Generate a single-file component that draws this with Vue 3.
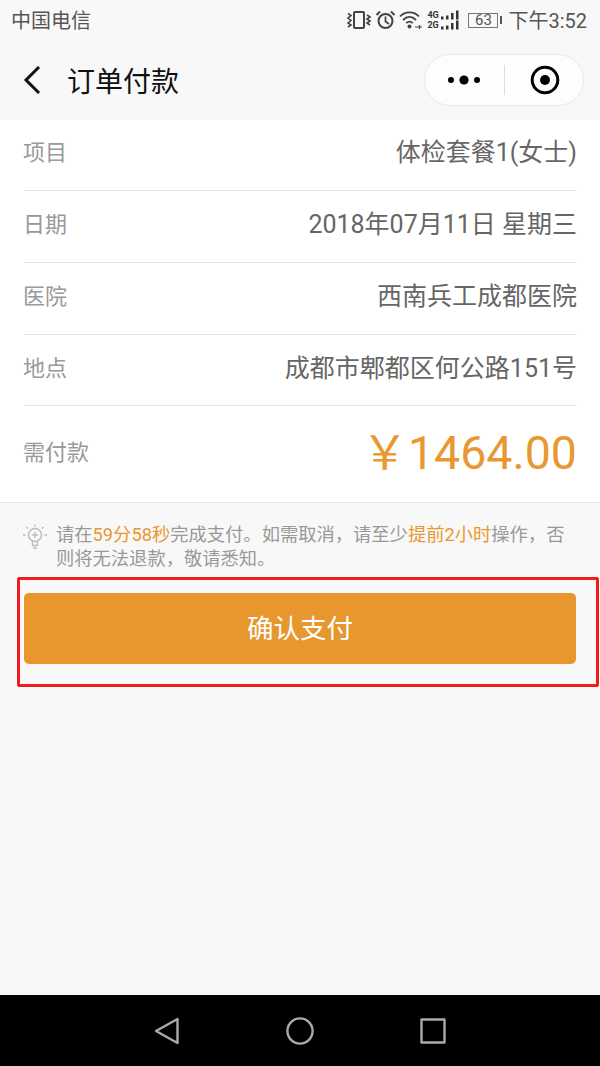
<script setup>
const rows = [
  { label: '项目', value: '体检套餐1(女士)' },
  { label: '日期', value: '2018年07月11日 星期三' },
  { label: '医院', value: '西南兵工成都医院' },
  { label: '地点', value: '成都市郫都区何公路151号' }
]
</script>

<template>
  <div class="page">
    <div class="status">
      <span class="carrier">中国电信</span>
      <div class="status-right">
        <!-- vibrate -->
        <svg class="ic" width="26" height="20" viewBox="0 0 26 20" fill="none" stroke="#444">
          <rect x="8" y="2" width="10" height="16" rx="1" stroke-width="2" />
          <path d="M2 3.5 L5 5.5 L2 8 L5 10.5 L2 13 L5 15 L2 17" stroke-width="1.6" />
          <path d="M21 5 L24 7 L21 9 L24 11 L21 13 L24 15" stroke-width="1.6" />
        </svg>
        <!-- alarm -->
        <svg class="ic" width="21" height="20" viewBox="0 0 21 20" fill="none" stroke="#444" stroke-width="2">
          <circle cx="10.5" cy="11" r="7" />
          <path d="M10.5 6.5 V11.5 L14 14" stroke-width="1.8" />
          <path d="M1.5 5 L5 1.5 M19.5 5 L16 1.5" />
        </svg>
        <!-- wifi -->
        <svg class="ic" width="24" height="20" viewBox="0 0 24 20" fill="none" stroke="#444" stroke-width="1.8">
          <path d="M1 6.5 C6 1 15 1 20 6.5" />
          <path d="M4 10 C8 6 13 6 17 10" />
          <path d="M7.2 13.2 C9.5 11 11.5 11 13.8 13.2" />
          <circle cx="10.5" cy="16.5" r="2" fill="#444" stroke="none" />
          <path d="M16 17 H23 M20.5 15 V19" stroke-width="1.2" />
        </svg>
        <!-- signal -->
        <div class="signal">
          <div class="sig-row">
            <span class="net">4G</span>
            <svg width="20" height="10" viewBox="0 0 20 10" fill="#333">
              <rect x="1" y="6.5" width="2.5" height="3" /><rect x="6" y="5.5" width="2.5" height="4" /><rect x="11" y="3" width="2.5" height="6.5" /><rect x="16" y="0.5" width="2.5" height="9" />
            </svg>
          </div>
          <div class="sig-row">
            <span class="net">2G</span>
            <svg width="20" height="10" viewBox="0 0 20 10" fill="#333">
              <rect x="1" y="6.5" width="2.5" height="3" /><rect x="6" y="5.5" width="2.5" height="4" /><rect x="11" y="3" width="2.5" height="6.5" /><rect x="16" y="0.5" width="2.5" height="9" />
            </svg>
          </div>
        </div>
        <div class="battery"><span class="batt-box">63</span><i class="batt-tip"></i></div>
        <span class="time">下午3:52</span>
      </div>
    </div>

    <div class="nav">
      <svg class="back" width="20" height="30" viewBox="0 0 20 30" fill="none" stroke="#111" stroke-width="3">
        <path d="M17 2 L4 15 L17 28" />
      </svg>
      <span class="title">订单付款</span>
      <div class="capsule">
        <div class="cap-part">
          <svg width="34" height="12" viewBox="0 0 34 12" fill="#000">
            <circle cx="4" cy="6" r="3" /><circle cx="17" cy="6" r="4.6" /><circle cx="30" cy="6" r="3" />
          </svg>
        </div>
        <i class="cap-line"></i>
        <div class="cap-part">
          <svg class="target" width="30" height="30" viewBox="0 0 30 30">
            <circle cx="15" cy="15" r="12.8" fill="none" stroke="#000" stroke-width="3" />
            <circle cx="15" cy="15" r="5" fill="#000" />
          </svg>
        </div>
      </div>
    </div>

    <div class="card">
      <div v-for="r in rows" :key="r.label" class="row">
        <span class="label">{{ r.label }}</span>
        <span class="value">{{ r.value }}</span>
      </div>
      <div class="pay">
        <span class="label">需付款</span>
        <span class="amount">￥1464.00</span>
      </div>
    </div>

    <div class="tip">
      <svg class="bulb" width="26" height="26" viewBox="0 0 26 26" fill="none" stroke="#bbb" stroke-width="1.4">
        <circle cx="13" cy="11" r="6.5" />
        <path d="M10.5 17 V21.5 H15.5 V17 M11 24 H15 M13 8 V14 M10 11 H16" />
        <path d="M1 11 H3.5 M22.5 11 H25 M4.5 3 L6 4.5 M21.5 3 L20 4.5 M13 0.5 V2.5" />
      </svg>
      <p>请在<em>59分58秒</em>完成支付。如需取消，请至少<em>提前2小时</em>操作，否则将无法退款，敬请悉知。</p>
    </div>

    <div class="btn-wrap">
      <div class="btn">确认支付</div>
      <div class="mark"></div>
    </div>

    <div class="spacer"></div>

    <div class="softkeys">
      <svg width="26" height="28" viewBox="0 0 26 28" fill="none" stroke="#aaa" stroke-width="2.4" stroke-linejoin="round">
        <path d="M23.5 2 V26 L2 14 Z" />
      </svg>
      <svg width="28" height="28" viewBox="0 0 28 28" fill="none" stroke="#aaa" stroke-width="2.4">
        <circle cx="14" cy="14" r="12.6" />
      </svg>
      <svg width="26" height="26" viewBox="0 0 26 26" fill="none" stroke="#aaa" stroke-width="2.4" stroke-linejoin="round">
        <rect x="1.5" y="1.5" width="23" height="23" />
      </svg>
    </div>
  </div>
</template>

<style>
html, body { margin: 0; background: #f8f8f8; }
</style>

<style scoped>
.page {
  width: 600px;
  height: 1066px;
  display: flex;
  flex-direction: column;
  background: #f8f8f8;
  font-family: Roboto, "Noto Sans CJK SC", sans-serif;
  overflow: hidden;
}

.status { height: 40px; padding: 0 13px 0 11px; display: flex; align-items: center; justify-content: space-between; color: #555; }
.carrier { font-size: 20px; line-height: 24px; margin-top: 1px; }
.status-right { display: flex; align-items: center; }
.ic { margin-right: 3px; }
.signal { display: flex; flex-direction: column; margin-left: 1px; }
.sig-row { display: flex; align-items: center; height: 10px; }
.net { font-size: 9px; font-weight: 700; line-height: 10px; width: 13px; color: #333; }
.battery { display: flex; align-items: center; margin-left: 8px; }
.batt-box { width: 28px; height: 13px; border: 1px solid #777; font-size: 15px; line-height: 13px; text-align: center; color: #555; }
.batt-tip { width: 2px; height: 8px; background: #555; margin-left: 2px; }
.time { font-size: 20px; line-height: 24px; margin: 1px 0 0 6px; }

.nav { height: 80px; display: flex; align-items: center; padding: 0 16px 0 22px; }
.back { margin-right: 25px; }
.title { font-size: 28px; color: #111; flex: 1; }
.capsule { width: 160px; height: 52px; box-sizing: border-box; border: 1px solid #e8e8e8; border-radius: 26px; background: #fdfdfd; display: flex; align-items: center; }
.cap-part { flex: 1; display: flex; justify-content: center; align-items: center; }
.target { margin-left: 2px; }
.cap-line { width: 1px; height: 30px; background: #ddd; }

.card { background: #fff; padding: 0 23px 0 24px; border-bottom: 1px solid #e9e9e9; }
.row { height: 72px; box-sizing: border-box; padding-bottom: 10px; border-bottom: 1px solid #e5e5e5; display: flex; align-items: center; justify-content: space-between; }
.row:first-child { height: 71px; }
.row:nth-child(4) { height: 71px; padding-bottom: 8px; }
.label { font-size: 22px; color: #999; margin-left: -1px; }
.value { font-size: 25px; color: #666; }
.pay { height: 96px; display: flex; align-items: center; justify-content: space-between; }
.pay .label { margin-bottom: 8px; }
.amount { font-size: 46.5px; color: #e89830; line-height: 1; margin-bottom: 2px; }

.tip { display: flex; padding: 20px 30px 0 22px; height: 71px; box-sizing: border-box; }
.bulb { flex: none; margin: 1px 8px 0 0; }
.tip p { margin: 0; font-size: 18.3px; line-height: 24px; color: #999; }
.tip em { font-style: normal; color: #e89830; }

.btn-wrap { position: relative; padding: 19px 24px 0; }
.btn { height: 71px; box-sizing: border-box; padding-bottom: 4px; border-radius: 5px; background: #e8962e; color: #fff; font-size: 26.5px; display: flex; align-items: center; justify-content: center; }
.mark { position: absolute; left: 17px; top: 3px; width: 582px; height: 110px; box-sizing: border-box; border: 3px solid #f01c1c; border-radius: 2px; }

.spacer { flex: 1; }

.softkeys { height: 71px; background: #000; display: flex; align-items: center; padding: 0 154px; justify-content: space-between; }
</style>
